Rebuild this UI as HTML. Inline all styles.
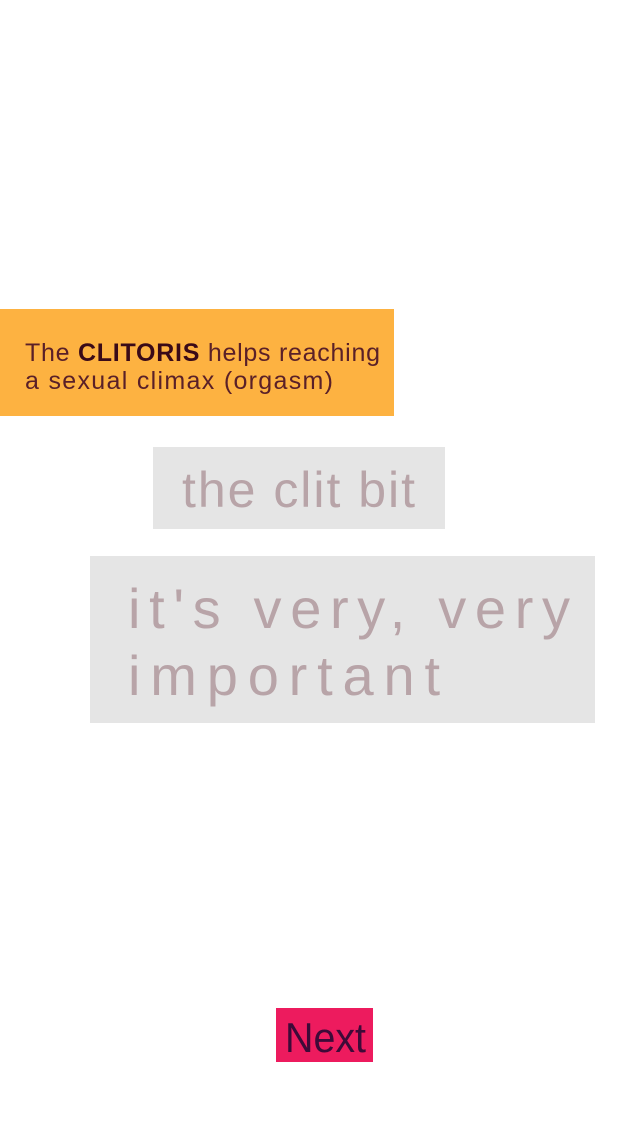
<!DOCTYPE html>
<html><head><meta charset="utf-8"><style>
html,body{margin:0;padding:0;background:#fff;width:640px;height:1136px;overflow:hidden}
svg{display:block}
</style></head><body>
<svg width="640" height="1136" xmlns="http://www.w3.org/2000/svg" font-family="Liberation Sans, sans-serif">
<rect x="0" y="309" width="394" height="107" fill="#fdb241"/>
<text x="25" y="361" font-size="25" fill="#5a2028" textLength="355" lengthAdjust="spacing">The <tspan font-weight="bold" fill="#3a0a18">CLITORIS</tspan> helps reaching</text>
<text x="25" y="389" font-size="25" fill="#5a2028" textLength="308" lengthAdjust="spacing">a sexual climax (orgasm)</text>
<rect x="153" y="447" width="292" height="82" fill="#e5e5e5"/>
<text x="182" y="507" font-size="50" fill="#b8a4a8" textLength="233" lengthAdjust="spacing">the clit bit</text>
<rect x="90" y="556" width="505" height="167" fill="#e5e5e5"/>
<text x="128" y="628" font-size="56" fill="#b8a4a8" textLength="442" lengthAdjust="spacing">it's very, very</text>
<text x="128" y="695" font-size="56" fill="#b8a4a8" textLength="312" lengthAdjust="spacing">important</text>
<rect x="276" y="1008" width="97" height="54" fill="#ed1b5e"/>
<text x="285" y="1052" font-size="42" fill="#3d0a38" textLength="81" lengthAdjust="spacingAndGlyphs">Next</text>
</svg>
</body></html>
